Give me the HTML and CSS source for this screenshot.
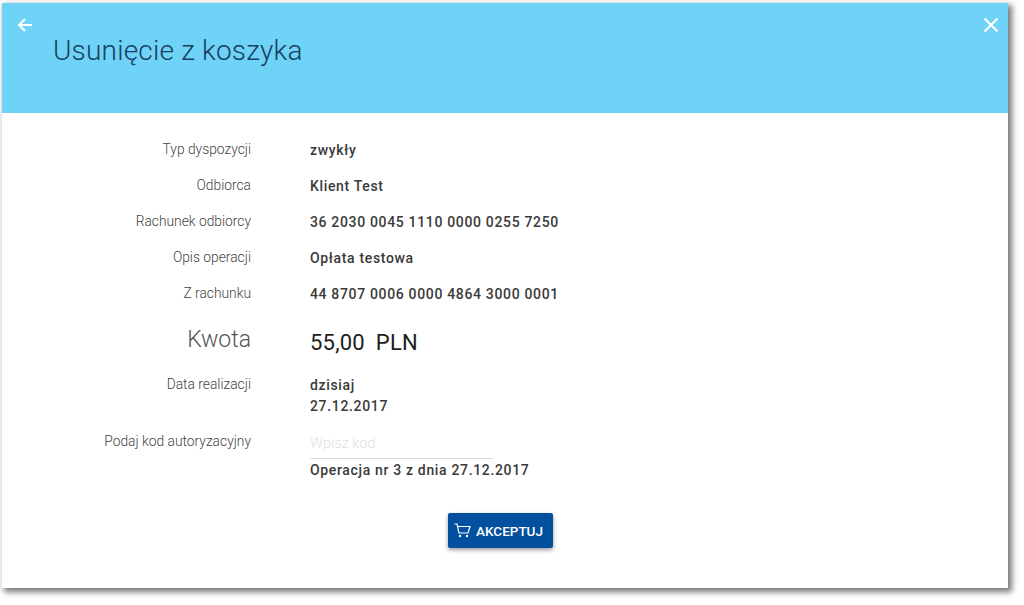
FILE: index.html
```html
<!DOCTYPE html>
<html lang="pl">
<head>
<meta charset="utf-8">
<title>Usunięcie z koszyka</title>
<link rel="stylesheet" href="styles.css">
</head>
<body>
<main class="panel">
  <header class="head">
    <button class="icon-btn" aria-label="Wstecz">
      <svg width="16" height="16" viewBox="0 0 16 16"><path d="M15 8H2.5M8 2L2 8l6 6" fill="none" stroke="#fff" stroke-width="2"/></svg>
    </button>
    <h1 class="title">Usunięcie z koszyka</h1>
    <button class="icon-btn" aria-label="Zamknij">
      <svg width="16" height="16" viewBox="0 0 16 16"><path d="M1.5 1.5l13 13M14.5 1.5l-13 13" fill="none" stroke="#fff" stroke-width="2.2"/></svg>
    </button>
  </header>
  <section class="form">
    <div class="row"><div class="label">Typ dyspozycji</div><div class="value">zwykły</div></div>
    <div class="row"><div class="label">Odbiorca</div><div class="value">Klient Test</div></div>
    <div class="row"><div class="label">Rachunek odbiorcy</div><div class="value">36 2030 0045 1110 0000 0255 7250</div></div>
    <div class="row"><div class="label">Opis operacji</div><div class="value">Opłata testowa</div></div>
    <div class="row"><div class="label">Z rachunku</div><div class="value">44 8707 0006 0000 4864 3000 0001</div></div>
    <div class="row row-amount"><div class="label">Kwota</div><div class="value"><span>55,00</span><span>PLN</span></div></div>
    <div class="row row-date"><div class="label">Data realizacji</div><div class="value">dzisiaj<br>27.12.2017</div></div>
    <div class="row row-code">
      <div class="label">Podaj kod autoryzacyjny</div>
      <div class="value">
        <input class="code" type="text" placeholder="Wpisz kod">
        <div class="hint">Operacja nr 3 z dnia 27.12.2017</div>
      </div>
    </div>
  </section>
  <div class="actions">
    <button class="accept">
      <svg width="17" height="15" viewBox="0 0 17 15"><path d="M0.5 1H3l2 9h9l2-6.5H3.8" fill="none" stroke="#fff" stroke-width="1.2"/><circle cx="6" cy="13" r="1.2" fill="#fff"/><circle cx="13" cy="13" r="1.2" fill="#fff"/></svg>
      AKCEPTUJ
    </button>
  </div>
</main>
</body>
</html>
```
FILE: styles.css
```css
* { box-sizing: border-box; }
html, body { margin: 0; height: 100%; background: #fff; overflow: hidden; }
body { padding: 3px 0 0 2px; font-family: Roboto, "Liberation Sans", sans-serif; }
.panel {
  width: 1006px;
  height: 585px;
  background: #fff;
  box-shadow: 3px 3px 6px 1px #777;
}
.head {
  height: 110px;
  background: #6fd2f7;
  display: flex;
  align-items: flex-start;
  padding: 14px 9px 0 15px;
}
.icon-btn {
  border: 0;
  background: none;
  padding: 0;
  width: 16px;
  height: 16px;
  display: block;
  flex: none;
}
.title {
  flex: 1;
  margin: 18px 0 0 20px;
  font-size: 28px;
  line-height: 32px;
  font-weight: 300;
  color: #17405f;
  letter-spacing: 0.2px;
}
.form { padding-top: 19px; }
.row { display: flex; height: 36px; align-items: flex-start; }
.label {
  width: 249px;
  flex: none;
  text-align: right;
  font-size: 13.8px;
  line-height: 18px;
  padding-top: 8px;
  font-weight: 300;
  color: #444;
}
.value {
  margin-left: 59px;
  font-size: 14px;
  line-height: 18px;
  padding-top: 9px;
  font-weight: 500;
  color: #3a3a3a;
  letter-spacing: 0.66px;
}
.row-amount { height: 58px; }
.row-amount .label { font-size: 23px; line-height: 28px; padding-top: 14px; color: #555; letter-spacing: 0; }
.row-amount .value { font-size: 22px; line-height: 28px; padding-top: 17px; font-weight: 400; color: #1d1d1d; letter-spacing: 0.2px; display: flex; gap: 11px; }
.row-date { height: 52px; margin-top: -1px; }
.row-date .value { line-height: 21px; padding-top: 6px; }
.row-date .label { padding-top: 6px; }
.row-code { height: auto; }
.row-code .label { padding-top: 11px; }
.row-code .value { padding-top: 14px; }
.code {
  display: block;
  width: 183px;
  height: 24px;
  border: 0;
  border-bottom: 1px solid #ddd;
  padding: 0 0 6px 0;
  margin: 0;
  font: 300 14.5px Roboto, sans-serif;
  outline: 0;
}
.code::placeholder { color: #dfdfdf; opacity: 1; }
.hint { margin-top: 2px; }
.actions { display: flex; justify-content: center; padding: 34px 9px 0 0; }
.accept {
  width: 105px;
  height: 35px;
  border: 0;
  border-radius: 2px;
  background: #03509f;
  color: #fff;
  font: 500 13.5px Roboto, sans-serif;
  display: flex;
  align-items: center;
  justify-content: center;
  gap: 5px;
  padding: 0 4px 0 0;
  box-shadow: 0 2px 4px rgba(0,0,0,.4);
}
```
